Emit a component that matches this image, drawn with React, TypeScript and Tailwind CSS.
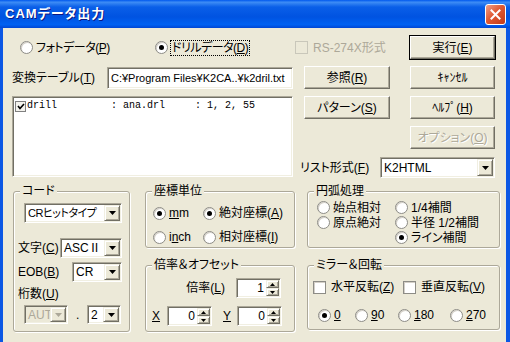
import React from "react";

const sunk =
  "border border-t-[#aca899] border-l-[#aca899] border-b-white border-r-white shadow-[inset_1px_1px_0_#716f64,inset_-1px_-1px_0_#f1efe2]";
const raised =
  "border border-t-[#f1efe2] border-l-[#f1efe2] border-b-[#716f64] border-r-[#716f64] shadow-[inset_1px_1px_0_#fff,inset_-1px_-1px_0_#aca899] bg-[#ece9d8]";

const U = ({ c }: { c: string }) => <span className="underline">{c}</span>;

const Radio = ({ on, children }: any) => (
  <div className="flex items-center gap-[3px] whitespace-nowrap">
    <span className="w-[13px] h-[13px] shrink-0 rounded-full border border-[#8d8c86] bg-white shadow-[inset_1px_1px_0_#d4d0c8] flex items-center justify-center">
      {on && <span className="w-[5px] h-[5px] rounded-full bg-black" />}
    </span>
    {children}
  </div>
);

const Check = ({ children, disabled }: any) => (
  <div className="flex items-center gap-[5px] whitespace-nowrap">
    <span
      className={`w-[13px] h-[13px] shrink-0 border ${
        disabled ? "border-[#c9c7ba] bg-[#ece9d8]" : "border-[#8d8c86] bg-white shadow-[inset_1px_1px_0_#d4d0c8]"
      }`}
    />
    <span className={disabled ? "text-[#aca899]" : ""}>{children}</span>
  </div>
);

const Btn = ({ children, def, disabled, w = "w-[86px]", className = "" }: any) => (
  <div
    className={`${w} h-[23px] shrink-0 flex items-center justify-center border border-t-white border-l-white border-b-[#716f64] border-r-[#716f64] bg-[#ece9d8] ${
      def ? "shadow-[0_0_0_1px_#000,inset_-1px_-1px_0_#aca899]" : "shadow-[inset_-1px_-1px_0_#aca899]"
    } ${disabled ? "text-[#aca899] [text-shadow:1px_1px_0_#fff]" : ""} ${className}`}
  >
    {children}
  </div>
);

const Arrow = ({ disabled }: any) => (
  <span className={`w-[16px] h-full shrink-0 flex items-center justify-center ${raised}`}>
    <svg width="7" height="4" viewBox="0 0 7 4">
      <path d="M0 0h7L3.5 4z" fill={disabled ? "#aca899" : "#000"} />
    </svg>
  </span>
);

const Select = ({ value, w, h = "h-[20px]", disabled, className = "", textCls = "" }: any) => (
  <div
    className={`${w} ${h} shrink-0 ${sunk} ${
      disabled ? "bg-[#ece9d8] text-[#aca899]" : "bg-white"
    } flex items-center p-[1px] ${className}`}
  >
    <span className={`flex-1 pl-[2px] overflow-hidden whitespace-nowrap ${textCls}`}>{value}</span>
    <Arrow disabled={disabled} />
  </div>
);

const Spin = ({ v, w = "w-[45px]" }: any) => (
  <div className={`${w} h-[20px] shrink-0 ${sunk} bg-white flex p-[1px]`}>
    <span className="flex-1 text-right pr-[2px] leading-[16px]">{v}</span>
    <div className="w-[13px] flex flex-col">
      <span className={`flex-1 flex items-center justify-center ${raised}`}>
        <svg width="5" height="3" viewBox="0 0 5 3">
          <path d="M2.5 0L5 3H0z" fill="#000" />
        </svg>
      </span>
      <span className={`flex-1 flex items-center justify-center ${raised}`}>
        <svg width="5" height="3" viewBox="0 0 5 3">
          <path d="M0 0h5L2.5 3z" fill="#000" />
        </svg>
      </span>
    </div>
  </div>
);

const Group = ({ title, className = "", children }: any) => (
  <fieldset
    className={`border border-[#aca899] rounded-[3px] shadow-[inset_1px_1px_0_#fff,1px_1px_0_#fff] ${className}`}
  >
    <legend className="ml-[6px] px-[2px] leading-[14px] bg-[#ece9d8]">{title}</legend>
    {children}
  </fieldset>
);

export default function App() {
  return (
    <div className="w-[510px] h-[342px] overflow-hidden flex flex-col font-['Liberation_Sans','Noto_Sans_CJK_JP',sans-serif] [font-feature-settings:'palt'] text-[12px] leading-[14px] text-black">
      {/* title bar */}
      <div className="h-[28px] shrink-0 flex items-center justify-between pl-[5px] pr-[4px] bg-[linear-gradient(180deg,#0058ee_0%,#3d8cf5_8%,#0a5fe8_25%,#0053e1_60%,#0061f2_88%,#0046d4_100%)]">
        <span className="text-white font-bold text-[13px] tracking-[1px] [text-shadow:1px_1px_0_#0a1883]">
          CAMデータ出力
        </span>
        <div className="w-[21px] h-[21px] rounded-[3px] border border-white bg-[linear-gradient(135deg,#f0a08a,#e05a34_45%,#c23a17)] flex items-center justify-center">
          <svg width="11" height="11" viewBox="0 0 11 11">
            <path d="M1.5 1.5l8 8M9.5 1.5l-8 8" stroke="#fff" strokeWidth="2" strokeLinecap="square" />
          </svg>
        </div>
      </div>

      <div className="flex flex-1">
        <div className="w-[3px] bg-[#0b57e4]" />
        <div className="flex-1 bg-[#ece9d8] pt-[8px]">
          {/* row 1 */}
          <div className="flex items-center h-[23px]">
            <div className="w-[152px] pl-[17px]">
              <Radio>
                <span className="tracking-[-0.5px]">
                  フォトデータ(<U c="P" />)
                </span>
              </Radio>
            </div>
            <div className="w-[140px]">
              <Radio on>
                <span className="border border-dotted border-black px-[1px] -ml-[1px] tracking-[-0.5px]">
                  ドリルデータ(<U c="D" />)
                </span>
              </Radio>
            </div>
            <div className="w-[115px]">
              <Check disabled>RS-274X形式</Check>
            </div>
            <Btn def w="w-[85px]">
              実行(<U c="E" />)
            </Btn>
          </div>

          {/* row 2 */}
          <div className="flex items-center h-[23px] mt-[7px]">
            <div className="w-[104px] pl-[9px] whitespace-nowrap">
              変換テーブル(<U c="T" />)
            </div>
            <div className={`w-[186px] h-[22px] ${sunk} bg-white flex items-center px-[3px] whitespace-nowrap overflow-hidden text-[11px]`}>
              C:¥Program Files¥K2CA..¥k2dril.txt
            </div>
            <Btn className="ml-[11px]">
              参照(<U c="R" />)
            </Btn>
            <Btn className="ml-[20px]" w="w-[85px]">
              ｷｬﾝｾﾙ
            </Btn>
          </div>

          {/* row 3 */}
          <div className="flex mt-[7px]">
            <div className={`ml-[9px] w-[281px] h-[81px] shrink-0 ${sunk} bg-white pt-[3px] pl-[2px]`}>
              <div className="flex items-center gap-[1px]">
                <span className="w-[11px] h-[11px] border border-[#808080] bg-[#f4f3ee] flex items-center justify-center">
                  <svg width="8" height="7" viewBox="0 0 8 7">
                    <path d="M1 3l2 2.5L7 1" stroke="#000" strokeWidth="1.6" fill="none" />
                  </svg>
                </span>
                <span className="font-['Liberation_Mono',monospace] text-[10px] whitespace-pre leading-[12px]">
                  {"drill         : ana.drl     : 1, 2, 55"}
                </span>
              </div>
            </div>
            <div className="flex flex-col">
              <div className="flex">
                <Btn className="ml-[11px]">
                  パターン(<U c="S" />)
                </Btn>
                <Btn className="ml-[20px]" w="w-[85px]">
                  ﾍﾙﾌﾟ(<U c="H" />)
                </Btn>
              </div>
              <div className="flex mt-[7px]">
                <Btn disabled className="ml-[117px]" w="w-[85px]">
                  オプション(<U c="O" />)
                </Btn>
              </div>
              <div className="flex items-center mt-[8px]">
                <div className="ml-[7px] w-[80px] whitespace-nowrap">
                  リスト形式(<U c="F" />)
                </div>
                <Select value="K2HTML" w="w-[115px]" h="h-[21px]" />
              </div>
            </div>
          </div>

          {/* groups */}
          <div className="flex items-start pl-[10px] mt-[6px]">
            <Group title="コード" className="w-[117px] h-[148px]">
              <div className="flex flex-col pl-[4px]">
                <Select
                  value="CRヒットタイプ"
                  w="w-[98px]"
                  className="ml-[6px] mt-[5px]"
                  textCls="text-[11px] tracking-[-0.5px]"
                />
                <div className="flex items-center mt-[15px]">
                  <span className="w-[42px] whitespace-nowrap">
                    文字(<U c="C" />)
                  </span>
                  <Select value="ASCⅡ" w="w-[62px]" />
                </div>
                <div className="flex items-center mt-[4px]">
                  <span className="w-[54px] whitespace-nowrap">
                    EOB(<U c="B" />)
                  </span>
                  <Select value="CR" w="w-[50px]" />
                </div>
                <div className="mt-[5px]">
                  桁数(<U c="U" />)
                </div>
                <div className="flex items-center mt-[4px]">
                  <Select value="AUTO" w="w-[44px]" h="h-[19px]" disabled className="ml-[6px]" />
                  <span className="ml-[8px] w-[3px]">.</span>
                  <Select value="2" w="w-[34px]" h="h-[19px]" className="ml-[8px]" />
                </div>
              </div>
            </Group>

            <div className="flex flex-col w-[150px] ml-[15px]">
              <Group title="座標単位" className="h-[64px]">
                <div className="flex flex-col pl-[7px] pt-[7px] gap-[8px]">
                  <div className="flex items-center h-[16px]">
                    <div className="w-[50px]">
                      <Radio on>
                        <span>
                          <U c="m" />m
                        </span>
                      </Radio>
                    </div>
                    <Radio on>
                      <span>
                        絶対座標(<U c="A" />)
                      </span>
                    </Radio>
                  </div>
                  <div className="flex items-center h-[16px]">
                    <div className="w-[50px]">
                      <Radio>
                        <span>
                          i<U c="n" />ch
                        </span>
                      </Radio>
                    </div>
                    <Radio>
                      <span>
                        相対座標(<U c="I" />)
                      </span>
                    </Radio>
                  </div>
                </div>
              </Group>
              <Group title="倍率＆オフセット" className="h-[74px] mt-[10px]">
                <div className="flex flex-col pt-[6px]">
                  <div className="flex items-center">
                    <span className="w-[90px] pr-[11px] text-right whitespace-nowrap">
                      倍率(<U c="L" />)
                    </span>
                    <Spin v="1" />
                  </div>
                  <div className="flex items-center mt-[8px] pl-[6px]">
                    <span className="w-[15px]">
                      <U c="X" />
                    </span>
                    <Spin v="0" />
                    <span className="w-[25px] pl-[11px]">
                      <U c="Y" />
                    </span>
                    <Spin v="0" />
                  </div>
                </div>
              </Group>
            </div>

            <div className="flex flex-col w-[193px] ml-[12px]">
              <Group title="円弧処理" className="h-[64px]">
                <div className="flex pl-[9px] pt-[2px]">
                  <div className="w-[78px] flex flex-col">
                    <div className="h-[15px] flex items-center">
                      <Radio>
                        <span>始点相対</span>
                      </Radio>
                    </div>
                    <div className="h-[15px] flex items-center">
                      <Radio>
                        <span>原点絶対</span>
                      </Radio>
                    </div>
                  </div>
                  <div className="flex flex-col">
                    <div className="h-[15px] flex items-center">
                      <Radio>
                        <span>1/4補間</span>
                      </Radio>
                    </div>
                    <div className="h-[15px] flex items-center">
                      <Radio>
                        <span>半径 1/2補間</span>
                      </Radio>
                    </div>
                    <div className="h-[15px] flex items-center">
                      <Radio on>
                        <span>ライン補間</span>
                      </Radio>
                    </div>
                  </div>
                </div>
              </Group>
              <Group title="ミラー＆回転" className="h-[72px] mt-[10px]">
                <div className="flex flex-col pt-[8px]">
                  <div className="flex items-center h-[14px] pl-[5px]">
                    <div className="w-[90px]">
                      <Check>
                        水平反転(<U c="Z" />)
                      </Check>
                    </div>
                    <Check>
                      垂直反転(<U c="V" />)
                    </Check>
                  </div>
                  <div className="flex items-center h-[14px] pl-[10px] mt-[14px]">
                    <div className="w-[37px]">
                      <Radio on>
                        <U c="0" />
                      </Radio>
                    </div>
                    <div className="w-[43px]">
                      <Radio>
                        <span>
                          <U c="9" />0
                        </span>
                      </Radio>
                    </div>
                    <div className="w-[52px]">
                      <Radio>
                        <span>
                          <U c="1" />80
                        </span>
                      </Radio>
                    </div>
                    <Radio>
                      <span>
                        <U c="2" />70
                      </span>
                    </Radio>
                  </div>
                </div>
              </Group>
            </div>
          </div>
        </div>
        <div className="w-[4px] bg-[#0b57e4]" />
      </div>
    </div>
  );
}
